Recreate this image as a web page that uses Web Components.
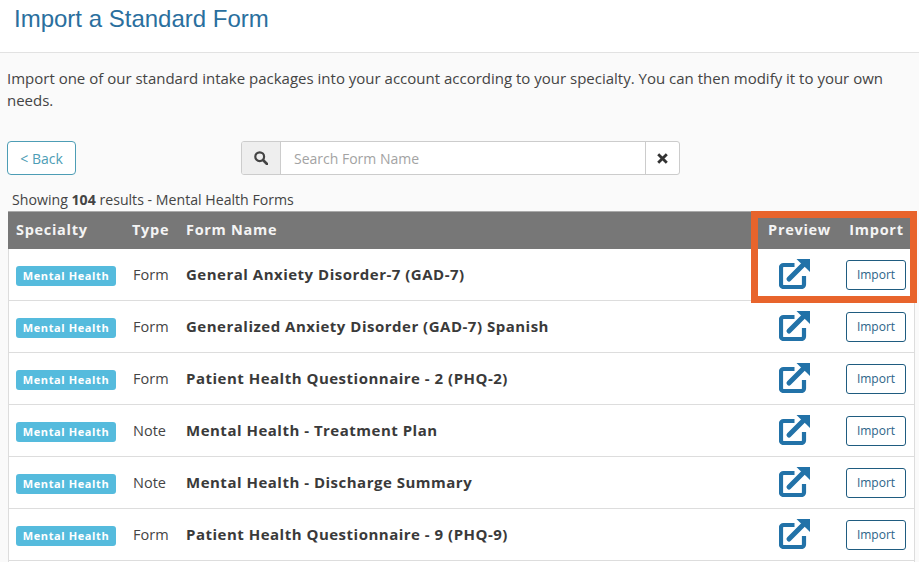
<!DOCTYPE html>
<html><head><meta charset="utf-8"><title>Import a Standard Form</title>
<style>
html,body{margin:0;height:562px;overflow:hidden;background:#fafafa}
body{font-family:"Open Sans",sans-serif;color:#444}
</style></head><body>
<template id="t-page"><style>
:host{display:block}
header{background:#fff;height:52px;border-bottom:1px solid #e2e2e2;box-sizing:content-box;padding-left:14px;display:flex;align-items:flex-start}
h1{margin:4px 0 0;font:400 24px/30px "Liberation Sans",Arial,sans-serif;color:#2a6f9e}
p{margin:0;padding:14px 7px 0;font-size:15px;line-height:22px;color:#444;height:71px;box-sizing:content-box}
.tools{display:flex;padding:0 7px;height:34px;margin-top:3px}
.count{font-size:14.15px;line-height:18px;padding:0 5px 0 12px;margin-top:16px;color:#444;height:20px}
</style>
<header><h1>Import a Standard Form</h1></header>
<p>Import one of our standard intake packages into your account according to your specialty. You can then modify it to your own needs.</p>
<div class="tools"><slot name="back"></slot><slot name="search"></slot></div>
<div class="count">Showing <b>104</b> results - Mental Health Forms</div>
<slot></slot></template>

<template id="t-back"><style>
:host{display:block}
a{display:flex;align-items:center;justify-content:center;width:69px;height:34px;box-sizing:border-box;border:1px solid #4d9db5;border-radius:4px;color:#4d9db5;font-size:14px;background:#fff}
</style><a><slot></slot></a></template>

<template id="t-search"><style>
:host{display:flex;margin-left:165px;width:439px;height:34px;box-sizing:border-box;border:1px solid #ccc;border-radius:3px;background:#fff;overflow:hidden}
.a{width:38px;background:#eee;border-right:1px solid #ccc;display:flex;align-items:center;justify-content:center}
.i{flex:1;font-size:14px;color:#a3a3a3;padding-left:13px;display:flex;align-items:center}
.x{width:33px;border-left:1px solid #ccc;display:flex;align-items:center;justify-content:center}
</style>
<div class="a"><svg width="14" height="14" viewBox="0 0 14 14" fill="none" stroke="#444" stroke-width="2.2"><circle cx="5.7" cy="5.7" r="4.4"/><path d="M9 9l4 4" stroke-linecap="round" stroke-width="2.6"/></svg></div>
<div class="i">Search Form Name</div>
<div class="x"><svg width="11" height="11" viewBox="0 0 11 11" fill="none" stroke="#333" stroke-width="2.8"><path d="M1.2 1.2l8.6 8.6M9.8 1.2l-8.6 8.6"/></svg></div>
</template>

<template id="t-table"><style>
:host{display:block;position:relative;margin:0 4px 0 8px;padding-bottom:1px;background:#fff;border-left:1px solid #ddd;border-right:1px solid #ddd}
.head{margin:0 -1px;display:grid;grid-template-columns:124px 54px 1fr 93px 69px;background:#777;color:#f4f4f4;height:35px;padding-bottom:2px;align-items:center;font-weight:700;font-size:14.5px;letter-spacing:.7px;border-top:1px solid #aaa;box-sizing:content-box}
.head span:first-child{padding-left:8px}.c{text-align:center}
.mark{position:absolute;left:742px;top:0;width:166px;height:92px;box-sizing:border-box;border:7px solid #e8642c;pointer-events:none}
</style>
<div class="head"><span>Specialty</span><span>Type</span><span>Form Name</span><span class="c">Preview</span><span class="c" style="white-space:nowrap;transform:translateX(-4px)">Import</span></div>
<slot></slot><div class="mark"></div></template>

<template id="t-row"><style>
:host{display:grid;grid-template-columns:124px 53px 1fr 93px 68px;height:52px;box-sizing:border-box;border-bottom:1px solid #ddd;align-items:center}
.b{margin:2px 0 0 7px;width:100px;height:20px;box-sizing:border-box;background:#55bbdd;border-radius:3px;color:#fff;font-size:11px;font-weight:700;letter-spacing:.6px;display:flex;align-items:center;justify-content:center;white-space:nowrap}
.t{font-size:14.5px;color:#444}
.n{font-size:15px;font-weight:700;color:#3a3a3a;letter-spacing:.5px;white-space:nowrap;margin-top:-2px}
.p{display:flex;justify-content:center;margin-left:-10px}
.im{justify-self:start;width:60px;height:30px;box-sizing:border-box;border:1px solid #1f5c80;border-radius:3px;color:#2b6488;font-size:12px;display:flex;align-items:center;justify-content:center}
svg{display:block;margin-top:-3px}
</style>
<div class="b">Mental Health</div><div class="t"><slot name="type"></slot></div><div class="n"><slot></slot></div>
<div class="p"><svg width="31" height="31" viewBox="0 0 31 31" fill="none"><path d="M15.500 7H4.500A2.500 2.500 0 0 0 2 9.500V26.500A2.500 2.500 0 0 0 4.500 29H22.500A2.500 2.500 0 0 0 25 26.500V18" stroke="#2272a8" stroke-width="4.200"/><path d="M10 21L24 7" stroke="#2272a8" stroke-width="5" stroke-linecap="round"/><path d="M17.500 1H31V14L27 10 21 4.500Z" fill="#2272a8"/></svg></div>
<div class="im">Import</div></template>

<std-page>
<back-btn slot="back">&lt; Back</back-btn>
<search-bar slot="search"></search-bar>
<form-table>
<form-row><span slot="type">Form</span>General Anxiety Disorder-7 (GAD-7)</form-row>
<form-row><span slot="type">Form</span>Generalized Anxiety Disorder (GAD-7) Spanish</form-row>
<form-row><span slot="type">Form</span>Patient Health Questionnaire - 2 (PHQ-2)</form-row>
<form-row><span slot="type">Note</span>Mental Health - Treatment Plan</form-row>
<form-row><span slot="type">Note</span>Mental Health - Discharge Summary</form-row>
<form-row><span slot="type">Form</span>Patient Health Questionnaire - 9 (PHQ-9)</form-row>
</form-table>
</std-page>
<script>
for(const [n,t] of [['std-page','t-page'],['back-btn','t-back'],['search-bar','t-search'],['form-table','t-table'],['form-row','t-row']]){
customElements.define(n,class extends HTMLElement{constructor(){super();this.attachShadow({mode:'open'}).append(document.getElementById(t).content.cloneNode(true))}});
}
</script>
</body></html>
